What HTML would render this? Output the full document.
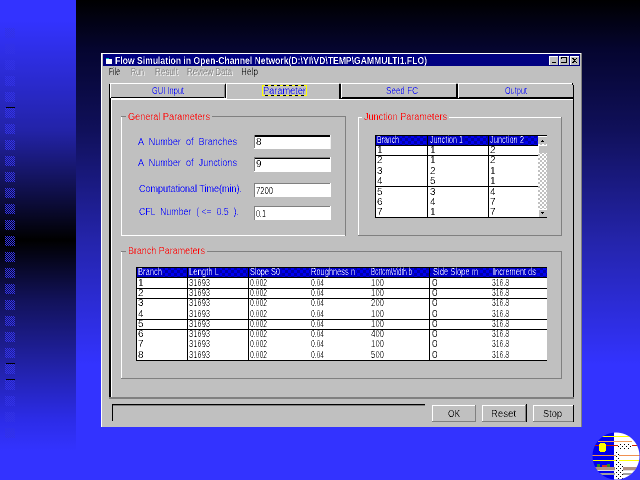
<!DOCTYPE html>
<html>
<head>
<meta charset="utf-8">
<style>
html,body{margin:0;padding:0;background:#000;width:640px;height:480px;overflow:hidden}
svg{display:block}
text{font-family:"Liberation Sans",sans-serif;font-size:10px;white-space:pre}
.b{fill:#0000ff}.r{fill:#ff0000}.w{fill:#fff}.k{fill:#000}.g{fill:#808080}
</style>
</head>
<body>
<svg width="640" height="480" viewBox="0 0 640 480" xmlns="http://www.w3.org/2000/svg">
<defs>
<linearGradient id="bgR" gradientUnits="userSpaceOnUse" x1="0" y1="0" x2="0" y2="365">
<stop offset="0" stop-color="#000"/><stop offset="0.137" stop-color="#050530"/><stop offset="0.356" stop-color="#10105a"/><stop offset="0.658" stop-color="#2424aa"/><stop offset="1" stop-color="#3333ff"/>
</linearGradient>
<linearGradient id="bgL" gradientUnits="userSpaceOnUse" x1="0" y1="0" x2="0" y2="480">
<stop offset="0" stop-color="#3333ff"/><stop offset="0.042" stop-color="#3333ff"/><stop offset="0.271" stop-color="#2323a8"/><stop offset="0.5" stop-color="#000"/><stop offset="0.625" stop-color="#12125a"/><stop offset="0.75" stop-color="#2020a0"/><stop offset="0.875" stop-color="#2c2ce8"/><stop offset="0.94" stop-color="#3333ff"/><stop offset="1" stop-color="#3333ff"/>
</linearGradient>
<path id="rw" d="M0 0h1v1H0zM2 0h1v1H2zM4 0h1v1H4zM6 0h1v1H6zM8 0h1v1H8zM1 1h1v1H1zM3 1h1v1H3zM5 1h1v1H5zM7 1h1v1H7zM9 1h1v1H9z" fill="#3232e6"/>
<g id="sq"><use href="#rw" y="0"/><use href="#rw" y="2"/><use href="#rw" y="4"/><use href="#rw" y="6"/><use href="#rw" y="8"/></g>
<pattern id="hdr" patternUnits="userSpaceOnUse" width="6" height="6"><rect width="6" height="6" fill="#0000a8"/><rect width="3" height="3" fill="#0000f0"/><rect x="3" y="3" width="3" height="3" fill="#0000f0"/></pattern>
<pattern id="sb" patternUnits="userSpaceOnUse" width="4" height="4"><rect width="4" height="4" fill="#fff"/><rect width="2" height="2" fill="#c0c0c0"/><rect x="2" y="2" width="2" height="2" fill="#c0c0c0"/></pattern>
<pattern id="dots" patternUnits="userSpaceOnUse" width="4" height="4"><rect width="4" height="4" fill="#fff"/><rect width="1" height="1" fill="#000"/><rect x="2" y="2" width="1" height="1" fill="#000"/></pattern>
<clipPath id="logo"><circle cx="616" cy="456" r="23.5"/></clipPath>
<filter id="t" filterUnits="userSpaceOnUse" x="0" y="0" width="640" height="480" color-interpolation-filters="sRGB">
<feComponentTransfer><feFuncA type="discrete" tableValues="0 0 1"/></feComponentTransfer>
</filter>
</defs>

<g shape-rendering="crispEdges">
<rect width="640" height="480" fill="url(#bgR)"/>
<rect y="365" width="640" height="115" fill="#3333ff"/>
<rect width="76" height="480" fill="url(#bgL)"/>
<use href="#sq" x="5" y="28"/><use href="#sq" x="5" y="44"/><use href="#sq" x="5" y="60"/><use href="#sq" x="5" y="76"/><use href="#sq" x="5" y="92"/><use href="#sq" x="5" y="108"/><use href="#sq" x="5" y="124"/><use href="#sq" x="5" y="140"/><use href="#sq" x="5" y="156"/><use href="#sq" x="5" y="172"/><use href="#sq" x="5" y="188"/><use href="#sq" x="5" y="204"/><use href="#sq" x="5" y="220"/><use href="#sq" x="5" y="236"/><use href="#sq" x="5" y="252"/><use href="#sq" x="5" y="268"/><use href="#sq" x="5" y="284"/><use href="#sq" x="5" y="300"/><use href="#sq" x="5" y="316"/><use href="#sq" x="5" y="332"/><use href="#sq" x="5" y="348"/><use href="#sq" x="5" y="364"/><use href="#sq" x="5" y="380"/><use href="#sq" x="5" y="396"/><use href="#sq" x="5" y="412"/><use href="#sq" x="5" y="428"/>
<g fill="#000"><rect x="6" y="107" width="9" height="1"/><rect x="6" y="363" width="9" height="1"/><rect x="6" y="379" width="9" height="1"/></g>

<!-- window -->
<rect x="101" y="53" width="481" height="374" fill="#c0c0c0"/>
<rect x="101" y="53" width="481" height="1" fill="#fff"/>
<rect x="101" y="53" width="1" height="374" fill="#fff"/>
<rect x="581" y="53" width="1" height="374" fill="#808080"/>
<rect x="103" y="54" width="477" height="12" fill="#000080"/>
<rect x="106" y="59" width="6" height="5" fill="#fff"/><rect x="106" y="58" width="3" height="1" fill="#00c0c0"/>

<!-- title buttons -->
<rect x="549" y="56" width="9" height="9" fill="#c0c0c0"/><rect x="549" y="56" width="9" height="1" fill="#fff"/><rect x="549" y="56" width="1" height="9" fill="#fff"/><rect x="552" y="62" width="4" height="1" fill="#000"/>
<rect x="559" y="56" width="10" height="9" fill="#c0c0c0"/><rect x="559" y="56" width="10" height="1" fill="#fff"/><rect x="559" y="56" width="1" height="9" fill="#fff"/><rect x="561" y="57" width="6" height="1" fill="#000"/><rect x="566" y="57" width="1" height="6" fill="#000"/><rect x="561" y="62" width="6" height="1" fill="#000"/><rect x="561" y="57" width="1" height="2" fill="#000"/>
<rect x="570" y="56" width="9" height="9" fill="#c0c0c0"/><rect x="570" y="56" width="9" height="1" fill="#fff"/><rect x="570" y="56" width="1" height="9" fill="#fff"/><rect x="572" y="58" width="2" height="1" fill="#000"/><rect x="576" y="58" width="1" height="1" fill="#000"/><rect x="573" y="59" width="3" height="1" fill="#000"/><rect x="574" y="60" width="1" height="1" fill="#000"/><rect x="573" y="61" width="3" height="1" fill="#000"/><rect x="572" y="62" width="2" height="1" fill="#000"/><rect x="576" y="62" width="1" height="1" fill="#000"/>

<!-- tab page -->
<rect x="109" y="98" width="2" height="299" fill="#000"/>
<rect x="111" y="98" width="1" height="299" fill="#fff"/>
<rect x="112" y="99" width="462" height="1" fill="#fff"/>
<rect x="109" y="97" width="118" height="2" fill="#000"/>
<rect x="111" y="98" width="116" height="1" fill="#fff"/>
<rect x="339" y="97" width="234" height="2" fill="#000"/>
<rect x="340" y="99" width="233" height="1" fill="#fff"/>
<rect x="573" y="85" width="1" height="312" fill="#000"/>
<rect x="109" y="397" width="465" height="2" fill="#808080"/>

<!-- GUI tab -->
<rect x="110" y="83" width="115" height="1" fill="#fff"/>
<rect x="109" y="84" width="1" height="14" fill="#000"/>
<rect x="110" y="84" width="1" height="14" fill="#fff"/>
<rect x="225" y="84" width="1" height="14" fill="#000"/>
<rect x="224" y="85" width="1" height="13" fill="#808080"/>
<!-- Parameter tab -->
<rect x="226" y="83" width="113" height="1" fill="#fff"/>
<rect x="226" y="84" width="1" height="16" fill="#fff"/>
<!-- Seed tab -->
<rect x="341" y="83" width="115" height="1" fill="#fff"/>
<rect x="339" y="84" width="2" height="14" fill="#000"/>
<rect x="341" y="84" width="1" height="14" fill="#fff"/>
<rect x="456" y="84" width="2" height="14" fill="#000"/>
<rect x="458" y="83" width="114" height="1" fill="#fff"/>
<rect x="458" y="84" width="1" height="14" fill="#fff"/>
<rect x="572" y="83" width="1" height="2" fill="#000"/>
<!-- focus rect -->
<g fill="#ffff00">
<rect x="262" y="85" width="45" height="1"/><rect x="262" y="95" width="45" height="1"/><rect x="262" y="85" width="1" height="11"/><rect x="306" y="85" width="1" height="11"/>
</g>
<g fill="#000"><rect x="265" y="85" width="3" height="1"/><rect x="271" y="85" width="3" height="1"/><rect x="277" y="85" width="3" height="1"/><rect x="283" y="85" width="3" height="1"/><rect x="289" y="85" width="3" height="1"/><rect x="295" y="85" width="3" height="1"/><rect x="301" y="85" width="3" height="1"/><rect x="265" y="95" width="3" height="1"/><rect x="271" y="95" width="3" height="1"/><rect x="277" y="95" width="3" height="1"/><rect x="283" y="95" width="3" height="1"/><rect x="289" y="95" width="3" height="1"/><rect x="295" y="95" width="3" height="1"/><rect x="301" y="95" width="3" height="1"/></g>

<!-- General group -->
<rect x="121" y="116" width="5" height="1" fill="#808080"/><rect x="212" y="116" width="134" height="1" fill="#808080"/>
<rect x="121" y="117" width="1" height="119" fill="#fff"/>
<rect x="121" y="235" width="225" height="1" fill="#fff"/>
<rect x="345" y="116" width="1" height="120" fill="#808080"/>
<!-- Junction group -->
<rect x="358" y="117" width="4" height="1" fill="#fff"/><rect x="449" y="117" width="113" height="1" fill="#fff"/>
<rect x="358" y="117" width="1" height="119" fill="#fff"/>
<rect x="358" y="235" width="204" height="1" fill="#808080"/>
<rect x="561" y="117" width="1" height="119" fill="#808080"/>
<!-- Branch group -->
<rect x="121" y="251" width="5" height="1" fill="#808080"/><rect x="207" y="251" width="355" height="1" fill="#808080"/>
<rect x="121" y="252" width="1" height="126" fill="#fff"/>
<rect x="121" y="378" width="441" height="1" fill="#808080"/>
<rect x="561" y="251" width="1" height="128" fill="#808080"/>

<!-- Inputs -->
<g>
<rect x="254" y="135" width="77" height="14" fill="#fff"/><rect x="254" y="135" width="76" height="2" fill="#000"/><rect x="254" y="135" width="1" height="13" fill="#808080"/><rect x="330" y="135" width="1" height="14" fill="#eee"/>
<rect x="254" y="157" width="77" height="15" fill="#fff"/><rect x="254" y="157" width="76" height="1" fill="#808080"/><rect x="254" y="158" width="76" height="1" fill="#000"/><rect x="254" y="157" width="1" height="14" fill="#808080"/>
<rect x="254" y="183" width="77" height="14" fill="#fff"/><rect x="254" y="183" width="76" height="1" fill="#808080"/><rect x="254" y="183" width="1" height="14" fill="#808080"/>
<rect x="254" y="206" width="77" height="14" fill="#fff"/><rect x="254" y="206" width="76" height="1" fill="#808080"/><rect x="254" y="206" width="1" height="14" fill="#808080"/>
</g>

<!-- Junction table -->
<rect x="375" y="135" width="163" height="82" fill="#fff"/>
<rect x="375" y="135" width="163" height="10" fill="#0000c8"/>
<rect x="400" y="136" width="26" height="9" fill="url(#hdr)"/><rect x="465" y="136" width="22" height="9" fill="url(#hdr)"/><rect x="525" y="136" width="13" height="9" fill="url(#hdr)"/>
<g fill="#000">
<rect x="375" y="135" width="172" height="1"/>
<rect x="375" y="145" width="163" height="1"/>
<rect x="375" y="155" width="163" height="1"/>
<rect x="375" y="186" width="163" height="1"/>
<rect x="375" y="217" width="172" height="1"/>
<rect x="375" y="135" width="1" height="83"/>
<rect x="427" y="135" width="1" height="83"/>
<rect x="488" y="135" width="1" height="83"/>
</g>
<rect x="538" y="136" width="9" height="81" fill="url(#sb)"/>
<rect x="538" y="136" width="9" height="8" fill="#c0c0c0"/><rect x="538" y="136" width="9" height="1" fill="#fff"/><rect x="542" y="140" width="1" height="1" fill="#000"/><rect x="541" y="141" width="3" height="1" fill="#000"/>
<rect x="538" y="145" width="9" height="8" fill="#c0c0c0"/><rect x="538" y="145" width="9" height="1" fill="#fff"/><rect x="538" y="145" width="1" height="8" fill="#fff"/>
<rect x="538" y="209" width="9" height="8" fill="#c0c0c0"/><rect x="538" y="209" width="9" height="1" fill="#fff"/><rect x="538" y="209" width="1" height="8" fill="#fff"/><rect x="541" y="212" width="3" height="1" fill="#000"/><rect x="542" y="213" width="1" height="1" fill="#000"/>

<!-- Branch table -->
<rect x="136" y="267" width="411" height="93" fill="#fff"/>
<rect x="136" y="267" width="411" height="10" fill="#0000c8"/>
<rect x="163" y="268" width="23" height="9" fill="url(#hdr)"/><rect x="220" y="268" width="27" height="9" fill="url(#hdr)"/><rect x="282" y="268" width="28" height="9" fill="url(#hdr)"/><rect x="356" y="268" width="14" height="9" fill="url(#hdr)"/><rect x="413" y="268" width="18" height="9" fill="url(#hdr)"/><rect x="480" y="268" width="12" height="9" fill="url(#hdr)"/><rect x="537" y="268" width="10" height="9" fill="url(#hdr)"/>
<g fill="#000">
<rect x="136" y="267" width="411" height="1"/>
<rect x="136" y="277" width="411" height="1"/>
<rect x="136" y="288" width="411" height="1"/>
<rect x="136" y="298" width="411" height="1"/>
<rect x="136" y="319" width="411" height="1"/>
<rect x="136" y="329" width="411" height="1"/>
<rect x="136" y="360" width="411" height="1"/>
<rect x="136" y="267" width="1" height="94"/>
<rect x="187" y="267" width="1" height="94"/>
<rect x="248" y="267" width="1" height="94"/>
<rect x="429" y="267" width="1" height="94"/>
</g>

<!-- status + buttons -->
<rect x="112" y="404" width="313" height="1" fill="#000"/><rect x="112" y="405" width="313" height="1" fill="#808080"/>
<rect x="112" y="404" width="1" height="17" fill="#000"/>
<rect x="432" y="405" width="44" height="1" fill="#fff"/><rect x="432" y="405" width="1" height="16" fill="#fff"/><rect x="432" y="421" width="44" height="1" fill="#808080"/><rect x="475" y="405" width="1" height="17" fill="#808080"/>
<rect x="482" y="405" width="44" height="1" fill="#fff"/><rect x="482" y="405" width="1" height="16" fill="#fff"/><rect x="482" y="421" width="44" height="1" fill="#808080"/><rect x="525" y="405" width="1" height="17" fill="#808080"/><rect x="526" y="404" width="1" height="18" fill="#000"/>
<rect x="533" y="405" width="41" height="1" fill="#fff"/><rect x="533" y="405" width="1" height="16" fill="#fff"/><rect x="533" y="421" width="41" height="1" fill="#808080"/><rect x="573" y="405" width="1" height="17" fill="#000"/>

<!-- Logo -->
<g clip-path="url(#logo)">
<rect x="590" y="432" width="24" height="48" fill="#0000ee"/>
<rect x="614" y="432" width="26" height="48" fill="#fff"/>
<rect x="602" y="436" width="30" height="1" fill="#ffff00"/>
<rect x="598" y="441" width="34" height="1" fill="#f0a060"/>
<rect x="590" y="445" width="50" height="1" fill="#cc2000"/>
<rect x="590" y="455" width="50" height="1" fill="#f09050"/>
<rect x="590" y="460" width="50" height="1" fill="#ffff00"/>
<rect x="599" y="444" width="7" height="7" fill="#ffff00"/><rect x="600" y="443" width="5" height="9" fill="#ffff00"/>
<rect x="595" y="467" width="45" height="3" fill="#b09080"/>
<rect x="597" y="464" width="3" height="3" fill="#2a8a2a"/><rect x="602" y="465" width="5" height="2" fill="#cc3030"/><rect x="607" y="464" width="3" height="3" fill="#2a8a2a"/>
<rect x="595" y="470" width="45" height="1" fill="#e0e0e0"/>
<rect x="600" y="473" width="32" height="2" fill="#a0a0a0"/>
<rect x="615" y="464" width="8" height="16" fill="url(#dots)"/>
<rect x="618" y="443" width="14" height="7" fill="url(#dots)"/>
<rect x="616" y="451" width="3" height="13" fill="url(#dots)"/>
</g>
</g>

<g filter="url(#t)">
<text class="w" x="115" y="64" style="font-size:10.5px;font-weight:bold" textLength="312" lengthAdjust="spacingAndGlyphs">Flow Simulation in Open-Channel Network(D:\YI\VD\TEMP\GAMMULTI1.FLO)</text>
<text class="k" x="109" y="75" textLength="11" lengthAdjust="spacingAndGlyphs">File</text>
<text class="w" x="132" y="76" textLength="13" lengthAdjust="spacingAndGlyphs">Run</text><text class="g" x="131" y="75" textLength="13" lengthAdjust="spacingAndGlyphs">Run</text>
<text class="w" x="156" y="76" textLength="23" lengthAdjust="spacingAndGlyphs">Result</text><text class="g" x="155" y="75" textLength="23" lengthAdjust="spacingAndGlyphs">Result</text>
<text class="w" x="188" y="76" textLength="45" lengthAdjust="spacingAndGlyphs">Review Data</text><text class="g" x="187" y="75" textLength="45" lengthAdjust="spacingAndGlyphs">Review Data</text>
<text class="k" x="241" y="75" textLength="17" lengthAdjust="spacingAndGlyphs">Help</text>

<text class="b" x="152" y="94" textLength="32" lengthAdjust="spacingAndGlyphs">GUI Input</text>
<text class="b" x="263" y="94" textLength="43" lengthAdjust="spacingAndGlyphs">Parameter</text>
<text class="b" x="386" y="94" textLength="32" lengthAdjust="spacingAndGlyphs">Seed FC</text>
<text class="b" x="505" y="94" textLength="22" lengthAdjust="spacingAndGlyphs">Output</text>

<text class="r" x="128" y="120" textLength="82" lengthAdjust="spacingAndGlyphs">General Parameters</text>
<text class="r" x="364" y="120" textLength="83" lengthAdjust="spacingAndGlyphs">Junction Parameters</text>
<text class="r" x="128" y="254" textLength="77" lengthAdjust="spacingAndGlyphs">Branch Parameters</text>

<text class="b" x="138" y="145" textLength="99" lengthAdjust="spacingAndGlyphs">A  Number  of  Branches</text>
<text class="b" x="138" y="166" textLength="99" lengthAdjust="spacingAndGlyphs">A  Number  of  Junctions</text>
<text class="b" x="139" y="192" textLength="103" lengthAdjust="spacingAndGlyphs">Computational Time(min).</text>
<text class="b" x="139" y="215" textLength="100" lengthAdjust="spacingAndGlyphs">CFL  Number  ( &lt;=  0.5  ).</text>

<text class="k" x="256" y="145">8</text>
<text class="k" x="256" y="167">9</text>
<text class="k" x="256" y="194" textLength="17" lengthAdjust="spacingAndGlyphs">7200</text>
<text class="k" x="256" y="217" textLength="10" lengthAdjust="spacingAndGlyphs">0.1</text>

<text class="w" x="377" y="143" textLength="22" lengthAdjust="spacingAndGlyphs">Branch</text>
<text class="w" x="430" y="143" textLength="33" lengthAdjust="spacingAndGlyphs">Junction 1</text>
<text class="w" x="490" y="143" textLength="34" lengthAdjust="spacingAndGlyphs">Junction 2</text>
<g class="k">
<text x="377" y="153">1</text><text x="430" y="153">1</text><text x="490" y="153">2</text>
<text x="377" y="163">2</text><text x="430" y="163">1</text><text x="490" y="163">2</text>
<text x="377" y="174">3</text><text x="430" y="174">2</text><text x="490" y="174">1</text>
<text x="377" y="184">4</text><text x="430" y="184">5</text><text x="490" y="184">1</text>
<text x="377" y="195">5</text><text x="430" y="195">3</text><text x="490" y="195">4</text>
<text x="377" y="205">6</text><text x="430" y="205">4</text><text x="490" y="205">7</text>
<text x="377" y="215">7</text><text x="430" y="215">1</text><text x="490" y="215">7</text>
</g>

<text class="w" x="138" y="275" textLength="24" lengthAdjust="spacingAndGlyphs">Branch</text>
<text class="w" x="189" y="275" textLength="30" lengthAdjust="spacingAndGlyphs">Length L</text>
<text class="w" x="250" y="275" textLength="30" lengthAdjust="spacingAndGlyphs">Slope S0</text>
<text class="w" x="311" y="275" textLength="44" lengthAdjust="spacingAndGlyphs">Roughness n</text>
<text class="w" x="371" y="275" textLength="41" lengthAdjust="spacingAndGlyphs">BottomWidth b</text>
<text class="w" x="433" y="275" textLength="45" lengthAdjust="spacingAndGlyphs">Side Slope m</text>
<text class="w" x="493" y="275" textLength="43" lengthAdjust="spacingAndGlyphs">Increment ds</text>

<g class="k">
<text x="138" y="286">1</text><text x="189" y="286" textLength="21" lengthAdjust="spacingAndGlyphs">31693</text><text x="250" y="286" textLength="17" lengthAdjust="spacingAndGlyphs">0.002</text><text x="311" y="286" textLength="13" lengthAdjust="spacingAndGlyphs">0.04</text><text x="371" y="286" textLength="13" lengthAdjust="spacingAndGlyphs">100</text><text x="432" y="286">0</text><text x="492" y="286" textLength="17" lengthAdjust="spacingAndGlyphs">316.8</text>
<text x="138" y="296">2</text><text x="189" y="296" textLength="21" lengthAdjust="spacingAndGlyphs">31693</text><text x="250" y="296" textLength="17" lengthAdjust="spacingAndGlyphs">0.002</text><text x="311" y="296" textLength="13" lengthAdjust="spacingAndGlyphs">0.04</text><text x="371" y="296" textLength="13" lengthAdjust="spacingAndGlyphs">100</text><text x="432" y="296">0</text><text x="492" y="296" textLength="17" lengthAdjust="spacingAndGlyphs">316.8</text>
<text x="138" y="306">3</text><text x="189" y="306" textLength="21" lengthAdjust="spacingAndGlyphs">31693</text><text x="250" y="306" textLength="17" lengthAdjust="spacingAndGlyphs">0.002</text><text x="311" y="306" textLength="13" lengthAdjust="spacingAndGlyphs">0.04</text><text x="371" y="306" textLength="13" lengthAdjust="spacingAndGlyphs">200</text><text x="432" y="306">0</text><text x="492" y="306" textLength="17" lengthAdjust="spacingAndGlyphs">316.8</text>
<text x="138" y="317">4</text><text x="189" y="317" textLength="21" lengthAdjust="spacingAndGlyphs">31693</text><text x="250" y="317" textLength="17" lengthAdjust="spacingAndGlyphs">0.002</text><text x="311" y="317" textLength="13" lengthAdjust="spacingAndGlyphs">0.04</text><text x="371" y="317" textLength="13" lengthAdjust="spacingAndGlyphs">100</text><text x="432" y="317">0</text><text x="492" y="317" textLength="17" lengthAdjust="spacingAndGlyphs">316.8</text>
<text x="138" y="327">5</text><text x="189" y="327" textLength="21" lengthAdjust="spacingAndGlyphs">31693</text><text x="250" y="327" textLength="17" lengthAdjust="spacingAndGlyphs">0.002</text><text x="311" y="327" textLength="13" lengthAdjust="spacingAndGlyphs">0.04</text><text x="371" y="327" textLength="13" lengthAdjust="spacingAndGlyphs">100</text><text x="432" y="327">0</text><text x="492" y="327" textLength="17" lengthAdjust="spacingAndGlyphs">316.8</text>
<text x="138" y="337">6</text><text x="189" y="337" textLength="21" lengthAdjust="spacingAndGlyphs">31693</text><text x="250" y="337" textLength="17" lengthAdjust="spacingAndGlyphs">0.002</text><text x="311" y="337" textLength="13" lengthAdjust="spacingAndGlyphs">0.04</text><text x="371" y="337" textLength="13" lengthAdjust="spacingAndGlyphs">400</text><text x="432" y="337">0</text><text x="492" y="337" textLength="17" lengthAdjust="spacingAndGlyphs">316.8</text>
<text x="138" y="347">7</text><text x="189" y="347" textLength="21" lengthAdjust="spacingAndGlyphs">31693</text><text x="250" y="347" textLength="17" lengthAdjust="spacingAndGlyphs">0.002</text><text x="311" y="347" textLength="13" lengthAdjust="spacingAndGlyphs">0.04</text><text x="371" y="347" textLength="13" lengthAdjust="spacingAndGlyphs">100</text><text x="432" y="347">0</text><text x="492" y="347" textLength="17" lengthAdjust="spacingAndGlyphs">316.8</text>
<text x="138" y="358">8</text><text x="189" y="358" textLength="21" lengthAdjust="spacingAndGlyphs">31693</text><text x="250" y="358" textLength="17" lengthAdjust="spacingAndGlyphs">0.002</text><text x="311" y="358" textLength="13" lengthAdjust="spacingAndGlyphs">0.04</text><text x="371" y="358" textLength="13" lengthAdjust="spacingAndGlyphs">500</text><text x="432" y="358">0</text><text x="492" y="358" textLength="17" lengthAdjust="spacingAndGlyphs">316.8</text>
</g>

<text class="k" x="448" y="417" textLength="12" lengthAdjust="spacingAndGlyphs">OK</text>
<text class="k" x="491" y="417" textLength="25" lengthAdjust="spacingAndGlyphs">Reset</text>
<text class="k" x="543" y="417" textLength="19" lengthAdjust="spacingAndGlyphs">Stop</text>
</g>
</svg>
</body>
</html>
